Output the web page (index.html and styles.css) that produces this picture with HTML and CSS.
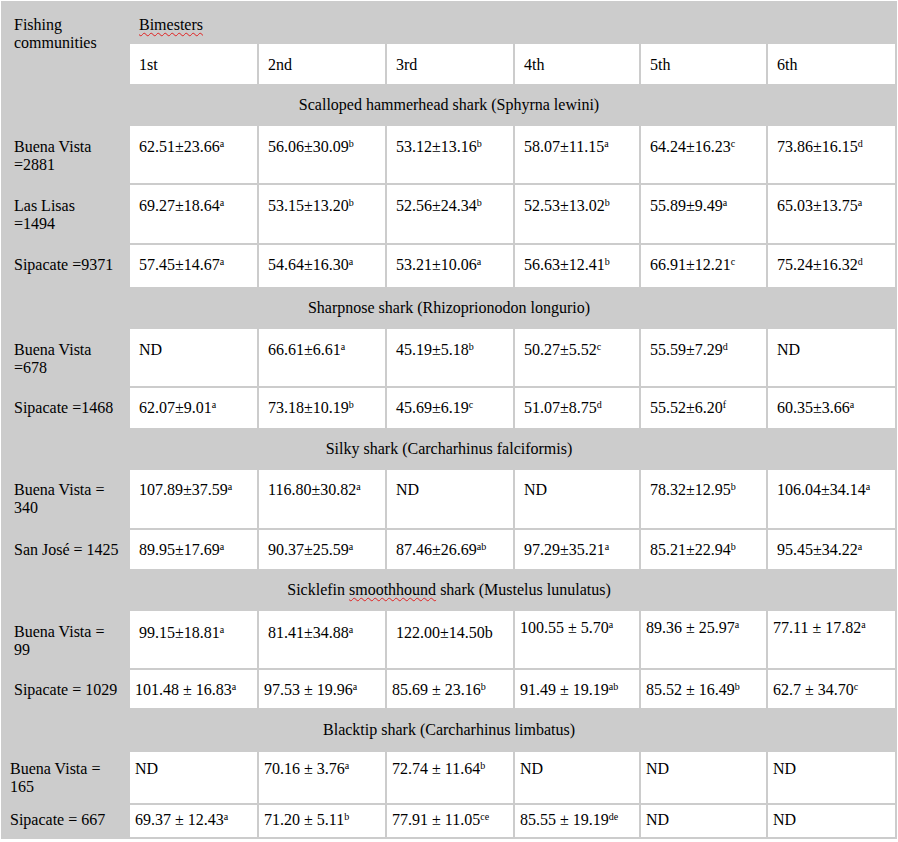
FILE: index.html
```html
<!DOCTYPE html>
<html lang="en">
<head>
<meta charset="utf-8">
<title>Shark sizes by bimester</title>
<link rel="stylesheet" href="styles.css">
</head>
<body>
<table class="grid">
  <colgroup>
    <col class="w0"><col class="w1"><col class="w2"><col class="w3"><col class="w4"><col class="w5"><col class="w6">
  </colgroup>
  <tr class="h39">
    <td class="lab head" rowspan="2">Fishing<br>communities</td>
    <td class="bim" colspan="6"><span class="sq">Bimesters</span></td>
  </tr>
  <tr class="h40">
    <td class="c hd">1st</td><td class="c hd">2nd</td><td class="c hd">3rd</td><td class="c hd">4th</td><td class="c hd">5th</td><td class="c hd">6th</td>
  </tr>

  <tr class="h38"><td class="sec" colspan="7">Scalloped hammerhead shark (Sphyrna lewini)</td></tr>
  <tr class="h57">
    <td class="lab p12">Buena Vista<br>=2881</td>
    <td class="c p12">62.51±23.66<sup>a</sup></td>
    <td class="c p12">56.06±30.09<sup>b</sup></td>
    <td class="c p12">53.12±13.16<sup>b</sup></td>
    <td class="c p12">58.07±11.15<sup>a</sup></td>
    <td class="c p12">64.24±16.23<sup>c</sup></td>
    <td class="c p12">73.86±16.15<sup>d</sup></td>
  </tr>
  <tr class="h58">
    <td class="lab p12">Las Lisas<br>=1494</td>
    <td class="c p12">69.27±18.64<sup>a</sup></td>
    <td class="c p12">53.15±13.20<sup>b</sup></td>
    <td class="c p12">52.56±24.34<sup>b</sup></td>
    <td class="c p12">52.53±13.02<sup>b</sup></td>
    <td class="c p12">55.89±9.49<sup>a</sup></td>
    <td class="c p12">65.03±13.75<sup>a</sup></td>
  </tr>
  <tr class="h42">
    <td class="lab">Sipacate =9371</td>
    <td class="c">57.45±14.67<sup>a</sup></td>
    <td class="c">54.64±16.30<sup>a</sup></td>
    <td class="c">53.21±10.06<sup>a</sup></td>
    <td class="c">56.63±12.41<sup>b</sup></td>
    <td class="c">66.91±12.21<sup>c</sup></td>
    <td class="c">75.24±16.32<sup>d</sup></td>
  </tr>

  <tr class="h38"><td class="sec" colspan="7">Sharpnose shark (Rhizoprionodon longurio)</td></tr>
  <tr class="h57">
    <td class="lab p12">Buena Vista<br>=678</td>
    <td class="c p12">ND</td>
    <td class="c p12">66.61±6.61<sup>a</sup></td>
    <td class="c p12">45.19±5.18<sup>b</sup></td>
    <td class="c p12">50.27±5.52<sup>c</sup></td>
    <td class="c p12">55.59±7.29<sup>d</sup></td>
    <td class="c p12">ND</td>
  </tr>
  <tr class="h40">
    <td class="lab">Sipacate =1468</td>
    <td class="c">62.07±9.01<sup>a</sup></td>
    <td class="c">73.18±10.19<sup>b</sup></td>
    <td class="c">45.69±6.19<sup>c</sup></td>
    <td class="c">51.07±8.75<sup>d</sup></td>
    <td class="c">55.52±6.20<sup>f</sup></td>
    <td class="c">60.35±3.66<sup>a</sup></td>
  </tr>

  <tr class="h38"><td class="sec" colspan="7">Silky shark (Carcharhinus falciformis)</td></tr>
  <tr class="h58">
    <td class="lab">Buena Vista =<br>340</td>
    <td class="c">107.89±37.59<sup>a</sup></td>
    <td class="c">116.80±30.82<sup>a</sup></td>
    <td class="c">ND</td>
    <td class="c">ND</td>
    <td class="c">78.32±12.95<sup>b</sup></td>
    <td class="c">106.04±34.14<sup>a</sup></td>
  </tr>
  <tr class="h39">
    <td class="lab">San José = 1425</td>
    <td class="c">89.95±17.69<sup>a</sup></td>
    <td class="c">90.37±25.59<sup>a</sup></td>
    <td class="c">87.46±26.69<sup>ab</sup></td>
    <td class="c">97.29±35.21<sup>a</sup></td>
    <td class="c">85.21±22.94<sup>b</sup></td>
    <td class="c">95.45±34.22<sup>a</sup></td>
  </tr>

  <tr class="h38"><td class="sec" colspan="7">Sicklefin <span class="sq">smoothhound</span> shark (Mustelus lunulatus)</td></tr>
  <tr class="h57">
    <td class="lab p12">Buena Vista =<br>99</td>
    <td class="c p13">99.15±18.81<sup>a</sup></td>
    <td class="c p13">81.41±34.88<sup>a</sup></td>
    <td class="c p13">122.00±14.50b</td>
    <td class="c t p8">100.55 ± 5.70<sup>a</sup></td>
    <td class="c t p8">89.36 ± 25.97<sup>a</sup></td>
    <td class="c t p8">77.11 ± 17.82<sup>a</sup></td>
  </tr>
  <tr class="h38">
    <td class="lab">Sipacate = 1029</td>
    <td class="c t">101.48 ± 16.83<sup>a</sup></td>
    <td class="c t">97.53 ± 19.96<sup>a</sup></td>
    <td class="c t">85.69 ± 23.16<sup>b</sup></td>
    <td class="c t">91.49 ± 19.19<sup>ab</sup></td>
    <td class="c t">85.52 ± 16.49<sup>b</sup></td>
    <td class="c t">62.7 ± 34.70<sup>c</sup></td>
  </tr>

  <tr class="h40"><td class="sec" colspan="7">Blacktip shark (Carcharhinus limbatus)</td></tr>
  <tr class="h51">
    <td class="lab nar p8">Buena Vista =<br>165</td>
    <td class="c t p8">ND</td>
    <td class="c t p8">70.16 ± 3.76<sup>a</sup></td>
    <td class="c t p8">72.74 ± 11.64<sup>b</sup></td>
    <td class="c t p8">ND</td>
    <td class="c t p8">ND</td>
    <td class="c t p8">ND</td>
  </tr>
  <tr class="h32">
    <td class="lab nar p6">Sipacate = 667</td>
    <td class="c t p6">69.37 ± 12.43<sup>a</sup></td>
    <td class="c t p6">71.20 ± 5.11<sup>b</sup></td>
    <td class="c t p6">77.91 ± 11.05<sup>ce</sup></td>
    <td class="c t p6">85.55 ± 19.19<sup>de</sup></td>
    <td class="c t p6">ND</td>
    <td class="c t p6">ND</td>
  </tr>
</table>
</body>
</html>
```

FILE: styles.css
```css
html, body {
  margin: 0;
  padding: 0;
  background: #ffffff;
}

.grid {
  margin: 1px 0 0 1px;
  width: 896px;
  table-layout: fixed;
  border-collapse: separate;
  border-spacing: 2px;
  background: #cccccc;
  font-family: "Liberation Serif", "Times New Roman", serif;
  font-size: 16px;
  line-height: 18px;
  color: #000000;
}

.w0 { width: 125px; }
.w1 { width: 127px; }
.w2 { width: 126px; }
.w3 { width: 126px; }
.w4 { width: 124px; }
.w5 { width: 125px; }
.w6 { width: 127px; }

.grid td {
  vertical-align: top;
  padding: 11px 2px 0 9px;
  white-space: nowrap;
}

.h32 { height: 32px; }
.h38 { height: 38px; }
.h39 { height: 39px; }
.h40 { height: 40px; }
.h42 { height: 42px; }
.h51 { height: 51px; }
.h57 { height: 57px; }
.h58 { height: 58px; }

.grid td.lab {
  padding-left: 11px;
  padding-right: 2px;
}

.grid td.lab.head {
  padding-top: 13px;
}

.grid td.lab.nar {
  padding-left: 7px;
}

.grid td.bim {
  padding-top: 13px;
}

.grid td.c {
  background: #ffffff;
}

.grid td.hd {
  padding-top: 12px;
}

.grid td.t {
  padding-left: 5px;
}

.grid td.p12 { padding-top: 12px; }
.grid td.p13 { padding-top: 13px; }
.grid td.p8 { padding-top: 8px; }
.grid td.p6 { padding-top: 6px; }

.grid td.sec {
  text-align: center;
  vertical-align: middle;
  padding: 0;
}

.sq {
  text-decoration: underline wavy #e02020;
  text-decoration-thickness: 1px;
  text-underline-offset: 2px;
}

sup {
  font-size: 10px;
  line-height: 0;
  vertical-align: 5px;
}
```
